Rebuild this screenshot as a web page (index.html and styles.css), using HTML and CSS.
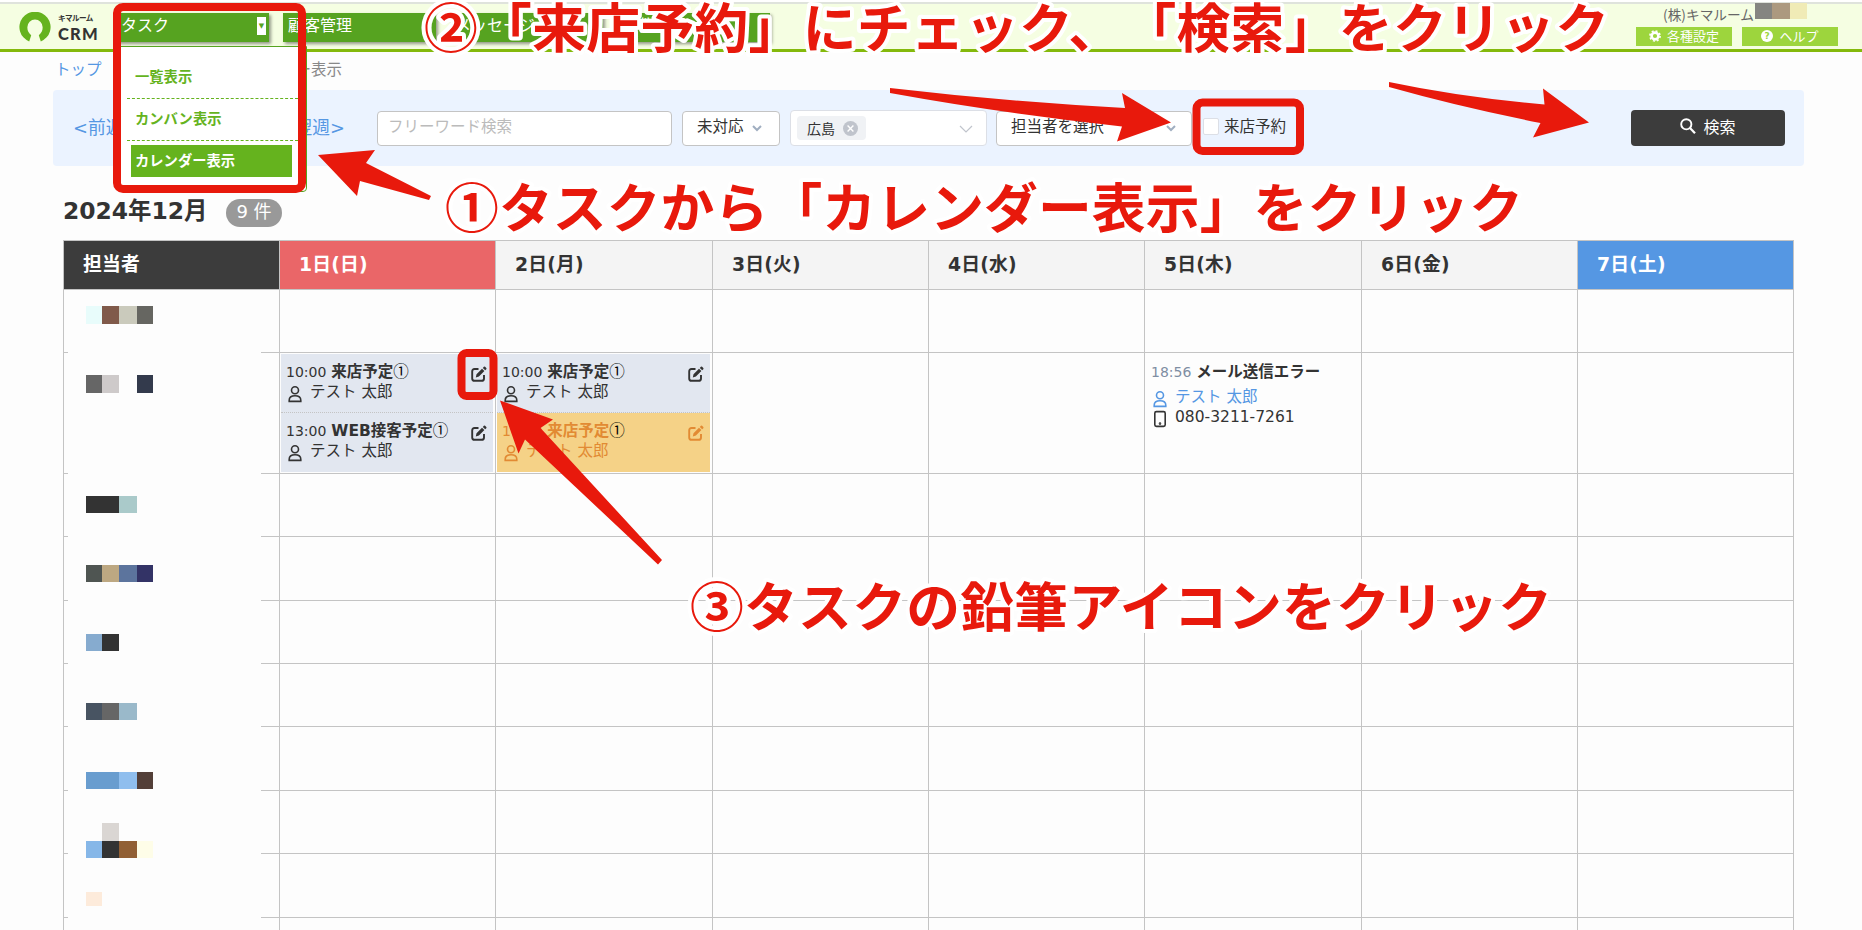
FILE: index.html
```html
<!DOCTYPE html>
<html lang="ja">
<head>
    <meta charset="UTF-8">
    <meta name="viewport" content="width=device-width, initial-scale=1.0">
    <title>キマルーム CRM</title>
    <link rel="stylesheet" href="styles.css">
</head>
<body>
    <svg class="symbols" width="0" height="0">
        <symbol id="icon-user" viewBox="0 0 14 18">
            <circle cx="7" cy="5.2" r="3.5"/>
            <path d="M1.2 16.4V15.2C1.2 12.4 3.4 10.8 7 10.8S12.8 12.4 12.8 15.2V16.4Z"/>
        </symbol>
        <symbol id="icon-edit" viewBox="0 0 16 16">
            <path d="M7.5 3H3.6Q1.2 3 1.2 5.4V12.4Q1.2 14.8 3.6 14.8H10.6Q13 14.8 13 12.4V9" fill="none" stroke="currentColor" stroke-width="1.9"/>
            <path d="M4.8 11.4L5.5 8.2L11 2.7L13.4 5.1L7.9 10.6ZM11.8 1.9L12.9 0.8Q13.5 0.3 14.1 0.8L15.3 2Q15.8 2.6 15.3 3.2L14.2 4.3Z" fill="currentColor"/>
        </symbol>
        <symbol id="icon-chevron" viewBox="0 0 12 12">
            <path d="M2 4L6 8L10 4"/>
        </symbol>
    </svg>

    <header class="header">
        <a class="logo" href="#">
            <svg width="32" height="30" viewBox="0 0 32 30">
                <path d="M10.2 29.4A15.6 15.4 0 1 1 21.8 29.4L19.8 23.2Q24 20 23.6 15A7.6 7.6 0 0 0 8.4 15Q8 20 12.2 23.2Z" fill="#65b31e"/>
            </svg>
            <span class="logo-text"><small>キマルーム</small><b>CRM</b></span>
        </a>
        <nav class="nav">
            <a class="nav-item" href="#">タスク<i class="nav-arrow">▼</i></a>
            <a class="nav-item" href="#">顧客管理</a>
            <a class="nav-item" href="#">メッセージ</a>
            <a class="nav-item" href="#">物件管理</a>
        </nav>
        <div class="account">
            <div class="company">(株)キマルーム<span class="company-mask"><i></i><i></i><i></i></span></div>
            <div class="account-buttons">
                <a href="#">
                    <svg width="12" height="12" viewBox="0 0 12 12"><circle cx="6" cy="6" r="3.4" fill="none" stroke="#fff" stroke-width="2.6"/><circle cx="6" cy="6" r="5.1" fill="none" stroke="#fff" stroke-width="1.6" stroke-dasharray="2 2"/></svg>
                    各種設定
                </a>
                <a href="#">
                    <svg width="12" height="12" viewBox="0 0 12 12"><circle cx="6" cy="6" r="6" fill="#fff"/><text x="6" y="9.4" text-anchor="middle">?</text></svg>
                    ヘルプ
                </a>
            </div>
        </div>
    </header>

    <div class="breadcrumb"><a href="#">トップ</a><span>タスク &gt; カレンダー表示</span></div>

    <form class="search">
        <div class="week"><a href="#">&lt;前週</a><a href="#">翌週&gt;</a></div>
        <div class="field keyword">フリーワード検索</div>
        <div class="field status">未対応<svg class="chevron"><use href="#icon-chevron"/></svg></div>
        <div class="field shop">
            <span class="tag">広島<svg width="15" height="15" viewBox="0 0 15 15"><circle cx="7.5" cy="7.5" r="7.5" fill="#c0c4cc"/><path d="M4.6 4.6L10.4 10.4M10.4 4.6L4.6 10.4" stroke="#fff" stroke-width="1.4"/></svg></span>
            <svg class="chevron wide" viewBox="0 0 14 14"><path d="M1 4L7 10L13 4"/></svg>
        </div>
        <div class="field staff">担当者を選択<svg class="chevron"><use href="#icon-chevron"/></svg></div>
        <label class="visit"><span class="checkbox"></span>来店予約</label>
        <button class="submit" type="button">
            <svg width="16" height="16" viewBox="0 0 16 16"><circle cx="6.3" cy="6.3" r="5.1" fill="none" stroke="#fff" stroke-width="1.9"/><path d="M10 10L15 15.2" stroke="#fff" stroke-width="2.2"/></svg>
            検索
        </button>
    </form>

    <div class="title"><h1>2024年12月</h1><span class="badge">9 件</span></div>

    <div class="calendar" id="calendar">
        <div class="cell head head-staff">担当者</div>
        <div class="cell head head-sun">1日(日)</div>
        <div class="cell head">2日(月)</div>
        <div class="cell head">3日(火)</div>
        <div class="cell head">4日(水)</div>
        <div class="cell head">5日(木)</div>
        <div class="cell head">6日(金)</div>
        <div class="cell head head-sat">7日(土)</div>

        <div class="cell"></div><div class="cell"></div><div class="cell"></div><div class="cell"></div><div class="cell"></div><div class="cell"></div><div class="cell"></div><div class="cell"></div>

        <div class="cell"></div>
        <div class="cell">
            <div class="task">
                <div class="task-title"><time>10:00</time> <b>来店予定</b><em>①</em></div>
                <div class="task-line"><svg class="user"><use href="#icon-user"/></svg>テスト 太郎</div>
                <svg class="edit"><use href="#icon-edit"/></svg>
            </div>
            <div class="task">
                <div class="task-title"><time>13:00</time> <b>WEB接客予定</b><em>①</em></div>
                <div class="task-line"><svg class="user"><use href="#icon-user"/></svg>テスト 太郎</div>
                <svg class="edit"><use href="#icon-edit"/></svg>
            </div>
        </div>
        <div class="cell">
            <div class="task">
                <div class="task-title"><time>10:00</time> <b>来店予定</b><em>①</em></div>
                <div class="task-line"><svg class="user"><use href="#icon-user"/></svg>テスト 太郎</div>
                <svg class="edit"><use href="#icon-edit"/></svg>
            </div>
            <div class="task task-orange">
                <div class="task-title"><time>10:00</time> <b>来店予定</b><em>①</em></div>
                <div class="task-line"><svg class="user"><use href="#icon-user"/></svg>テスト 太郎</div>
                <svg class="edit"><use href="#icon-edit"/></svg>
            </div>
        </div>
        <div class="cell"></div>
        <div class="cell"></div>
        <div class="cell">
            <div class="task task-plain">
                <div class="task-title"><time>18:56</time> <b>メール送信エラー</b></div>
                <div class="task-line link"><svg class="user"><use href="#icon-user"/></svg>テスト 太郎</div>
                <div class="task-line"><svg class="phone" viewBox="0 0 14 18"><rect x="1.8" y="1.6" width="10.4" height="14.8" rx="1.6"/><circle cx="7" cy="13.6" r="0.5"/></svg>080-3211-7261</div>
            </div>
        </div>
        <div class="cell"></div>
        <div class="cell"></div>

        <!-- 担当者名のモザイク -->
        <svg class="staff-mask" width="193" height="640" viewBox="68 290 193 640" shape-rendering="crispEdges">
            <rect x="68" y="290" width="193" height="640" fill="#fdfdfd"/>
            <rect x="86" y="306" width="16" height="18" fill="#e8fcfb"/><rect x="102" y="306" width="17" height="18" fill="#805a4a"/><rect x="119" y="306" width="18" height="18" fill="#cacabc"/><rect x="137" y="306" width="16" height="18" fill="#666661"/>
            <rect x="86" y="375" width="16" height="18" fill="#666"/><rect x="102" y="375" width="17" height="18" fill="#cecaca"/><rect x="137" y="375" width="16" height="18" fill="#333a4c"/>
            <rect x="86" y="496" width="33" height="17" fill="#333"/><rect x="119" y="496" width="18" height="17" fill="#aacaca"/>
            <rect x="86" y="565" width="16" height="17" fill="#4f5552"/><rect x="102" y="565" width="17" height="17" fill="#bda882"/><rect x="119" y="565" width="18" height="17" fill="#5c749d"/><rect x="137" y="565" width="16" height="17" fill="#333366"/>
            <rect x="86" y="634" width="16" height="17" fill="#86abcf"/><rect x="102" y="634" width="17" height="17" fill="#333"/>
            <rect x="86" y="703" width="16" height="17" fill="#485462"/><rect x="102" y="703" width="17" height="17" fill="#666"/><rect x="119" y="703" width="18" height="17" fill="#9ab9ca"/>
            <rect x="86" y="772" width="33" height="17" fill="#699dcf"/><rect x="119" y="772" width="18" height="17" fill="#8fbeee"/><rect x="137" y="772" width="16" height="17" fill="#533f38"/>
            <rect x="102" y="823" width="17" height="18" fill="#dad6d3"/>
            <rect x="86" y="841" width="16" height="17" fill="#86b7e8"/><rect x="102" y="841" width="17" height="17" fill="#333"/><rect x="119" y="841" width="18" height="17" fill="#915f34"/><rect x="137" y="841" width="16" height="17" fill="#fefde8"/>
            <rect x="86" y="892" width="16" height="14" fill="#fdebdb"/>
        </svg>
    </div>

    <div class="menu">
        <a href="#">一覧表示</a>
        <a href="#">カンバン表示</a>
        <a class="active" href="#">カレンダー表示</a>
    </div>

    <!-- 操作手順の注釈 -->
    <svg class="guide" width="1862" height="930" viewBox="0 0 1862 930">
        <g class="guide-box">
            <rect x="117" y="7" width="185" height="182" rx="6"/>
            <rect x="1196.5" y="102.5" width="103.5" height="48.5" rx="6"/>
            <rect x="461.5" y="353" width="32" height="43" rx="5"/>
        </g>
        <g class="guide-arrow">
            <path d="M318 155L375 150L366 163L431 196L429 200L360 181L357 196Z"/>
            <path d="M890 88Q1010 102 1125 108L1122 93L1171 122.500L1117 141.500L1122 126.500Q1000 113 890 93Z"/>
            <path d="M1389 82Q1460 97 1544.500 104.500L1543 88.500L1589 122.500L1533 137.500L1540.500 123Q1460 107 1389 87Z"/>
            <path d="M500 400.500L553 419.500L540.500 428L662 560L658 564.500L525 439.500L518.500 453.500Z"/>
        </g>
        <g class="guide-text">
            <text x="424" y="47.500" textLength="1185">②「来店予約」にチェック、「検索」をクリック</text>
            <text x="445" y="227.500" textLength="1078">①タスクから「カレンダー表示」をクリック</text>
            <text x="690" y="627" textLength="862">③タスクの鉛筆アイコンをクリック</text>
        </g>
    </svg>

    <script>
        // 予定のない行を追加
        const calendar = document.getElementById('calendar');
        for (let i = 0; i < 8 * 8; i++) {
            const cell = document.createElement('div');
            cell.className = 'cell';
            calendar.appendChild(cell);
        }
    </script>
</body>
</html>
```

FILE: styles.css
```css
/* 基本 */
* {
    box-sizing: border-box;
}

body {
    position: relative;
    width: 1862px;
    height: 930px;
    margin: 0;
    overflow: hidden;
    background: #fdfdfd;
    color: #333;
    font-family: "DejaVu Sans", "Noto Sans CJK JP", sans-serif;
    font-size: 15.5px;
}

a {
    color: #5597e3;
    text-decoration: none;
}

.symbols {
    position: absolute;
}

/* ヘッダー */
.header {
    display: flex;
    height: 52px;
    padding-left: 19px;
    background: #f5fee2;
    border-top: 2px solid #fff;
    border-bottom: 3px solid #84b90c;
    box-shadow: inset 0 2px #dfe3dc;
    font-family: "Noto Sans CJK JP", sans-serif;
}

.logo {
    display: flex;
    width: 97px;
    padding-top: 10px;
    color: #333;
}

.logo-text {
    display: flex;
    flex-direction: column;
    margin-left: 7px;
}

.logo-text small {
    font-size: 7.6px;
    font-weight: bold;
    line-height: 12px;
    letter-spacing: -0.6px;
    white-space: nowrap;
}

.logo-text b {
    font-family: "Lato", sans-serif;
    font-weight: 900;
    font-size: 16.500px;
    line-height: 20px;
    letter-spacing: 1.2px;
}

.nav {
    display: flex;
    gap: 14px;
    padding-top: 11px;
}

.nav-item {
    display: flex;
    justify-content: space-between;
    width: 153px;
    height: 29px;
    padding: 0 3px 0 5px;
    background: #56a320;
    box-shadow: 2px 2px 3px rgba(0, 0, 0, 0.4);
    color: #fff;
    font-size: 16px;
    line-height: 23px;
}

.nav-arrow {
    width: 9px;
    height: 18px;
    margin-top: 4px;
    background: #fff;
    color: #56a320;
    font: 7px/18px "DejaVu Sans", sans-serif;
    text-align: center;
}

.account {
    margin-left: auto;
    padding-right: 24px;
    color: #666;
}

.company {
    display: flex;
    height: 25px;
    padding-left: 27px;
    font-size: 13.700px;
    line-height: 24px;
}

.company-mask {
    display: flex;
    height: 16px;
    margin: 1px 0 0 1px;
}

.company-mask i {
    width: 17px;
    background: #858581;
}

.company-mask i:nth-child(2) {
    width: 18px;
    background: #ac997f;
}

.company-mask i:nth-child(3) {
    background: #f0ebb6;
}

.account-buttons {
    display: flex;
    gap: 10px;
}

.account-buttons a {
    display: flex;
    align-items: center;
    justify-content: center;
    gap: 6px;
    width: 96px;
    height: 19px;
    padding-bottom: 2px;
    background: #9dd53d;
    color: #fff;
    font-size: 13px;
}

.account-buttons text {
    fill: #9dd53d;
    font: bold 9px "DejaVu Sans", sans-serif;
}

/* パンくず */
.breadcrumb {
    display: flex;
    justify-content: space-between;
    width: 287px;
    height: 38px;
    margin-left: 55px;
    color: #888;
    line-height: 37px;
}

/* 検索フォーム */
.search {
    display: flex;
    align-items: center;
    width: 1751px;
    height: 76px;
    margin-left: 53px;
    padding: 0 19px 0 20px;
    background: #ebf3ff;
    border-radius: 4px;
}

.week {
    display: flex;
    justify-content: space-between;
    width: 272px;
    margin-right: 32px;
    padding-bottom: 5px;
    font-size: 17.800px;
}

.field {
    display: flex;
    align-items: center;
    height: 35px;
    margin-right: 10px;
    padding: 0 14px 6px;
    background: #fff;
    border: 1px solid #c4c4c4;
    border-radius: 4px;
}

.keyword {
    width: 295px;
    padding-left: 10px;
    color: #bbb;
}

.status {
    width: 98px;
}

.shop {
    width: 197px;
    height: 36px;
    margin-right: 9px;
    padding: 0 13px 0 6px;
    border-color: #dcdfe6;
}

.staff {
    width: 196px;
}

.chevron {
    width: 12px;
    height: 12px;
    margin: 6px 0 0 7px;
    fill: none;
    stroke: #a0aec0;
    stroke-width: 2;
}

.chevron.wide {
    width: 14px;
    height: 14px;
    margin-left: auto;
    margin-top: 2px;
    stroke: #c0c4cc;
    stroke-width: 1.2;
}

.staff .chevron {
    margin-left: auto;
}

.tag {
    display: flex;
    align-items: center;
    gap: 8px;
    height: 24px;
    padding: 0 8px 0 10px;
    background: #f0f2f5;
    border-radius: 4px;
    font-size: 14px;
}

.visit {
    display: flex;
    align-items: center;
    gap: 5px;
    margin-left: 1px;
    padding-bottom: 3px;
    line-height: 20px;
}

.checkbox {
    width: 16px;
    height: 17px;
    background: #fff;
    border: 1px solid #dcdfe6;
    border-radius: 2px;
}

.submit {
    display: flex;
    align-items: center;
    justify-content: center;
    gap: 7px;
    width: 154px;
    height: 36px;
    margin-left: auto;
    padding: 0 0 4px;
    background: #3c3c3c;
    border: none;
    border-radius: 4px;
    color: #fff;
    font-family: inherit;
    font-size: 16px;
}

/* 見出し */
.title {
    display: flex;
    align-items: center;
    height: 74px;
    padding: 16px 0 0 63px;
}

.title h1 {
    width: 163px;
    margin: 0;
    font-size: 23.400px;
    line-height: 30px;
    white-space: nowrap;
}

.badge {
    width: 56px;
    height: 28px;
    margin-top: 3px;
    background: #999;
    border-radius: 14px;
    color: #fff;
    font-size: 18px;
    line-height: 26px;
    text-align: center;
}

/* カレンダー */
.calendar {
    position: relative;
    display: grid;
    grid-template-columns: 216px 216px 217px 216px 216px 217px 216px 216px;
    grid-template-rows: 49px 63px 121px 63px 64px 63px 63px 64px 63px 64px 12px;
    width: 1731px;
    margin-left: 63px;
    border-top: 1px solid #c4c4c4;
    border-left: 1px solid #c4c4c4;
}

.cell {
    padding: 1px;
    border-right: 1px solid #c4c4c4;
    border-bottom: 1px solid #c4c4c4;
}

.cell:nth-last-child(-n+8) {
    border-bottom: none;
}

.head {
    padding-left: 19px;
    background: #f4f4f4;
    font-size: 18.800px;
    font-weight: bold;
    line-height: 45px;
    letter-spacing: 0.2px;
}

.head-staff {
    background: #3c3c3c;
    color: #fff;
}

.head-sun {
    background: #ea6668;
    color: #fff;
}

.head-sat {
    background: #5597e3;
    color: #fff;
}

.staff-mask {
    position: absolute;
    top: 49px;
    left: 4px;
}

/* タスク */
.task {
    position: relative;
    height: 59px;
    margin-right: 1px;
    padding: 8px 5px 0;
    background: #e2e7f0;
    border-bottom: 1px dotted #c4c4c4;
}

.task + .task {
    border-bottom: none;
}

.task-title {
    line-height: 20px;
    white-space: nowrap;
}

.task-title time {
    font-size: 14px;
}

.task-title em {
    color: #000;
    font-family: "Noto Sans CJK JP", sans-serif;
    font-style: normal;
    line-height: 1;
}

.task-line {
    display: flex;
    align-items: center;
    height: 20px;
    line-height: 20px;
}

.task-line svg {
    width: 14px;
    height: 18px;
    margin: 3px 8px 0 2px;
    fill: none;
    stroke: currentColor;
    stroke-width: 1.6;
}

.edit {
    position: absolute;
    top: 12px;
    right: 6px;
    width: 16px;
    height: 16px;
}

.task-orange {
    background: #f5d287;
    color: #e28a33;
}

.task.task-plain {
    background: none;
    border: none;
}

.task-plain .task-title {
    margin-bottom: 5px;
}

.task-plain time {
    color: #7f8ea3;
}

.link {
    color: #5597e3;
}

/* ドロップダウン */
.menu {
    position: absolute;
    top: 46px;
    left: 118px;
    width: 189px;
    height: 146px;
    padding: 10px 8px 0;
    background: #fff;
    border: 1px solid #56a320;
    border-radius: 0 0 4px 4px;
    font-family: "Noto Sans CJK JP", sans-serif;
}

.menu a {
    display: block;
    height: 42px;
    padding-left: 8px;
    border-bottom: 1px dashed #65b31e;
    color: #65b31e;
    font-size: 14.300px;
    font-weight: bold;
    line-height: 37px;
}

.menu .active {
    height: 32px;
    margin: 4px 6px 0 4px;
    padding-left: 4px;
    background: #65b31e;
    border: none;
    color: #fff;
    line-height: 29px;
}

/* 注釈 */
.guide {
    position: absolute;
    top: 0;
    left: 0;
    pointer-events: none;
}

.guide-box {
    fill: none;
    stroke: #e8190c;
    stroke-width: 8;
}

.guide-arrow {
    fill: #e8190c;
}

.guide-text {
    fill: #e8190c;
    stroke: #fff;
    stroke-width: 8;
    stroke-linejoin: round;
    paint-order: stroke;
    font-family: "Noto Sans CJK JP", sans-serif;
    font-size: 53.800px;
    font-weight: bold;
    text-spacing-trim: space-all;
    font-feature-settings: "chws" 0, "halt" 0, "palt" 0;
}
```
